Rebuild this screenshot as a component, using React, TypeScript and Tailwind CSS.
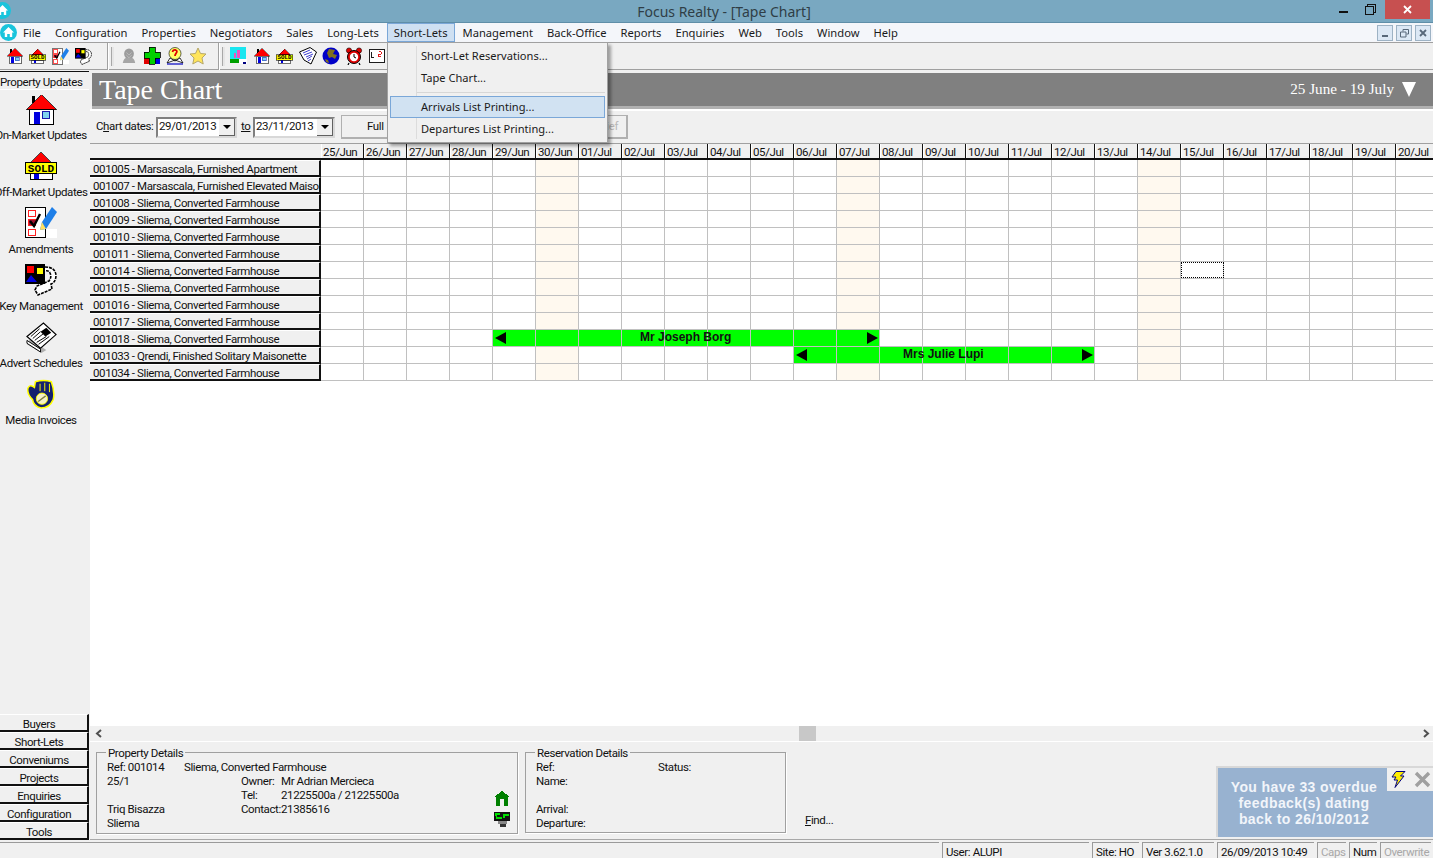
import React from 'react';

const menus = ['File', 'Configuration', 'Properties', 'Negotiators', 'Sales', 'Long-Lets', 'Short-Lets', 'Management', 'Back-Office', 'Reports', 'Enquiries', 'Web', 'Tools', 'Window', 'Help'];

const days = ['25/Jun', '26/Jun', '27/Jun', '28/Jun', '29/Jun', '30/Jun', '01/Jul', '02/Jul', '03/Jul', '04/Jul', '05/Jul', '06/Jul', '07/Jul', '08/Jul', '09/Jul', '10/Jul', '11/Jul', '12/Jul', '13/Jul', '14/Jul', '15/Jul', '16/Jul', '17/Jul', '18/Jul', '19/Jul', '20/Jul'];

const farmhouse = 'Sliema, Converted Farmhouse';
const properties = [
  '001005 - Marsascala, Furnished Apartment',
  '001007 - Marsascala, Furnished Elevated Maisonette',
  `001008 - ${farmhouse}`,
  `001009 - ${farmhouse}`,
  `001010 - ${farmhouse}`,
  `001011 - ${farmhouse}`,
  `001014 - ${farmhouse}`,
  `001015 - ${farmhouse}`,
  `001016 - ${farmhouse}`,
  `001017 - ${farmhouse}`,
  `001018 - ${farmhouse}`,
  '001033 - Qrendi, Finished Solitary Maisonette',
  `001034 - ${farmhouse}`,
];

const weekends = [5, 12, 19];
const bookings: Record<number, { from: number; to: number }> = {
  10: { from: 4, to: 12 },
  11: { from: 11, to: 17 },
};

const AppIcon = ({ size = 17 }: { size?: number }) => (
  <svg width={size} height={size} viewBox="0 0 17 17" className="shrink-0">
    <circle cx="8.5" cy="8.5" r="8.5" fill="#19c4dc" />
    <path d="M8.5 3 L14 8.5 H12.2 V13 H9.8 V10 H7.2 V13 H4.8 V8.5 H3 Z" fill="#fff" />
  </svg>
);

const House = ({ size = 32 }: { size?: number }) => (
  <svg width={size} height={size} viewBox="0 0 28 28" shapeRendering="crispEdges" className="shrink-0">
    <rect x="5" y="2" width="3" height="6" fill="#000" />
    <polygon points="14,0.5 27.5,14 0.5,14" fill="#ff0000" stroke="#000" strokeWidth="0.7" />
    <rect x="3.5" y="14" width="21" height="13.5" fill="#fff" stroke="#000" />
    <rect x="7" y="16" width="5.5" height="11" fill="#0000e0" />
    <rect x="14.5" y="16" width="7" height="6" fill="#7fd4ee" stroke="#0000a0" strokeWidth="0.8" />
  </svg>
);

const SoldHouse = ({ size = 32, wide = 32 }: { size?: number; wide?: number }) => (
  <svg width={wide} height={size} viewBox="0 0 32 28" shapeRendering="crispEdges" className="shrink-0">
    <polygon points="16,0.5 27,11 5,11" fill="#ff0000" stroke="#000" strokeWidth="0.7" />
    <rect x="5" y="21" width="22" height="6" fill="#fff" stroke="#000" />
    <rect x="9" y="21" width="5" height="6" fill="#0000e0" />
    <rect x="0.5" y="10.5" width="31" height="10.5" fill="#ffff00" stroke="#000" />
    <text x="16" y="19.5" textAnchor="middle" letterSpacing="0" fontFamily="'Liberation Mono', monospace" fontWeight="700" fontSize="11" fill="#000">SOLD</text>
  </svg>
);

const Checklist = ({ size = 32 }: { size?: number }) => (
  <svg width={size} height={size} viewBox="0 0 32 32" shapeRendering="crispEdges" className="shrink-0">
    <rect x="0.5" y="0.5" width="20" height="30" fill="#fff" stroke="#000" />
    <rect x="3.5" y="3.5" width="7" height="6" fill="#fff" stroke="#ff2020" strokeWidth="1.5" />
    <rect x="3.5" y="12.5" width="7" height="6" fill="#a01030" stroke="#ff2020" strokeWidth="1.5" />
    <rect x="3.5" y="22.5" width="7" height="6" fill="#fff" stroke="#ff2020" strokeWidth="1.5" />
    <path d="M5 14 L9 19 L15 7" fill="none" stroke="#000" strokeWidth="2.4" shapeRendering="auto" />
    <polygon points="27,0 32,5 21,22 15,23 17,15" fill="#1e7fe8" shapeRendering="auto" />
    <polygon points="21,22 15,23 17,15" fill="#ffe060" shapeRendering="auto" />
    <rect x="21" y="22" width="11" height="9" fill="#fff" />
  </svg>
);

const KeyMgmt = ({ size = 32 }: { size?: number }) => (
  <svg width={size} height={size} viewBox="0 0 32 32" className="shrink-0">
    <path d="M20 3 Q30 3 31 11 Q31 18 26 20 L27 25 L13 31 L10 26 L12 22 L24 17 Q27 13 25 9 Q24 6 20 7" fill="#fff" stroke="#000" strokeWidth="1.6" strokeDasharray="3 1" />
    <rect x="0" y="0" width="20" height="20" fill="#000" />
    <rect x="2" y="2" width="7" height="7" fill="#ff0000" />
    <rect x="12" y="4" width="6" height="6" fill="#ffff00" />
    <polygon points="6,11 12,18 1,18" fill="#0000e0" />
  </svg>
);

const Newspaper = ({ size = 32 }: { size?: number }) => (
  <svg width={size} height={size} viewBox="0 0 32 32" className="shrink-0">
    <polygon points="1,23 16,32 21,29 4,18" fill="#b0b0b0" />
    <polygon points="1,19 15,28 15,31 1,22" fill="#fff" stroke="#000" strokeWidth="1" />
    <polygon points="1,15 18,1 31,13 15,27" fill="#fff" stroke="#000" strokeWidth="1.2" />
    <polygon points="15,10 21,6 26,11 20,15" fill="#000" />
    <path d="M5 15 L14 7 M7 17 L15 10 M9 19 L18 12 M11 21 L21 15 M13 23 L24 15" stroke="#000" strokeWidth="1" />
  </svg>
);

const Glove = ({ size = 32 }: { size?: number }) => (
  <svg width={size} height={size} viewBox="0 0 32 32" className="shrink-0">
    <path d="M2 10 Q4 5 9 9 L10 3 Q19 0 27 3 Q31 14 29 22 Q25 31 16 31 Q8 29 7 22 Q1 16 2 10 Z" fill="#14206e" stroke="#ffff00" strokeWidth="1.6" />
    <path d="M15 5 V13 M20 4 V13 M25 5 V14" stroke="#ffff00" strokeWidth="1" />
    <circle cx="17" cy="21" r="6" fill="#f5f0c8" stroke="#ffff00" strokeWidth="1" />
    <path d="M13 24 L21 18" stroke="#808040" strokeWidth="1.4" />
  </svg>
);

const Person = () => (
  <svg width={16} height={18} viewBox="0 0 18 18" className="shrink-0">
    <ellipse cx="9" cy="6.5" rx="5.5" ry="6" fill="#9c9c9c" />
    <path d="M2 17 Q3 11 7 11 H11 Q15 11 16 17 Z" fill="#a6a6a6" />
    <path d="M6 5 L9 8 L12 5 M6 8 L9 11 L12 8" stroke="#bdbdbd" strokeWidth="1" fill="none" />
  </svg>
);

const GreenCross = () => (
  <svg width={18} height={18} viewBox="0 0 18 18" shapeRendering="crispEdges" className="shrink-0">
    <rect x="1" y="11" width="6" height="6" fill="#e00000" />
    <rect x="11" y="11" width="6" height="6" fill="#0000e0" />
    <path d="M6 0 H12 V5 H17 V11 H12 V17 H6 V11 H1 V5 H6 Z" fill="#00d000" stroke="#000" strokeWidth="0.8" />
  </svg>
);

const Question = () => (
  <svg width={18} height={18} viewBox="0 0 18 18" className="shrink-0">
    <circle cx="9" cy="6.5" r="6" fill="#ffff66" stroke="#000" strokeWidth="0.6" />
    <path d="M6.5 5 Q7 2.5 9.5 3 Q12 4 10 6.5 Q9 7.5 9 9" fill="none" stroke="#e00000" strokeWidth="1.8" />
    <path d="M1 16 L9 13 L17 16 L14 11 L9 14 L4 11 Z" fill="#fff" stroke="#000" strokeWidth="0.8" />
    <path d="M1 17 H17" stroke="#0000c0" strokeWidth="1.2" />
  </svg>
);

const Star = () => (
  <svg width={18} height={18} viewBox="0 0 18 18" className="shrink-0">
    <polygon points="9,1 11.5,6.5 17,7 13,11 14.2,17 9,14 3.8,17 5,11 1,7 6.5,6.5" fill="#ffe55c" stroke="#b5a76a" strokeWidth="1" />
  </svg>
);

const Picture = () => (
  <svg width={18} height={18} viewBox="0 0 18 18" shapeRendering="crispEdges" className="shrink-0">
    <rect x="0" y="0" width="16" height="15" fill="#19e6f0" />
    <rect x="0" y="12" width="10" height="4" fill="#00a000" />
    <rect x="7" y="3" width="3" height="8" fill="#f050c0" />
    <rect x="4" y="6" width="2" height="5" fill="#f050c0" />
    <rect x="9" y="12" width="8" height="5" fill="#fff" />
    <rect x="13" y="15" width="3" height="2" fill="#000080" />
  </svg>
);

const Survey = () => (
  <svg width={18} height={18} viewBox="0 0 18 18" className="shrink-0">
    <polygon points="0.5,5 11,0.5 17.5,5 12,17 5,13" fill="#fff" stroke="#000" strokeWidth="1" />
    <path d="M4 6 L11 3 M5 8 L13 5 M7 10 L14 7 M8 12 L13 9 M9 14 L12 12" stroke="#4040d0" strokeWidth="1" />
  </svg>
);

const Globe = () => (
  <svg width={18} height={18} viewBox="0 0 18 18" className="shrink-0">
    <circle cx="9" cy="9" r="8.5" fill="#0000c8" />
    <path d="M7 2 L13 3 L11 7 L15 8 L13 12 L10 10 L7 11 L5 6 Z" fill="#807020" />
    <path d="M3 12 L6 13 L7 16 L4 15 Z" fill="#807020" />
  </svg>
);

const AlarmClock = () => (
  <svg width={18} height={18} viewBox="0 0 18 18" className="shrink-0">
    <circle cx="4" cy="3.5" r="2.6" fill="#e00000" stroke="#000" strokeWidth="0.6" />
    <circle cx="14" cy="3.5" r="2.6" fill="#e00000" stroke="#000" strokeWidth="0.6" />
    <circle cx="9" cy="10" r="6.5" fill="#e00000" stroke="#000" strokeWidth="1" />
    <circle cx="9" cy="10" r="4.2" fill="#fff" />
    <path d="M9 7 V10 L11 11" stroke="#000" strokeWidth="1" fill="none" />
    <path d="M4 16 L3 18 M14 16 L15 18" stroke="#000" strokeWidth="1.2" />
  </svg>
);

const BookIcon = () => (
  <svg width={16} height={16} viewBox="0 0 18 18" shapeRendering="crispEdges" className="shrink-0">
    <rect x="0.5" y="1.5" width="17" height="15" fill="#fff" stroke="#000" />
    <rect x="8.5" y="1" width="1" height="15" fill="#000" />
    <path d="M3 4 V11 H6" stroke="#000" strokeWidth="1" fill="none" />
    <path d="M11 4 H14 V7 H11 V10 H14" stroke="#e00000" strokeWidth="1" fill="none" />
  </svg>
);

const Bolt = () => (
  <svg width={15} height={17} viewBox="0 0 15 17" className="shrink-0">
    <path d="M5 0.5 H14 L9.5 5 H13 L4 16.5 L6.5 9 H3 L5 6 H1 Z" fill="#ffee00" stroke="#000080" strokeWidth="1" />
  </svg>
);

const GripSep = ({ className }: { className: string }) => (
  <div className={`flex h-full items-center ${className}`}>
    <div className="h-[27px] w-[2px] border-r border-r-white bg-[#a0a0a0]" />
    <div className="ml-[2px] h-[19px] w-[3px] border-l border-[#a8a8a8] bg-[#e6e6e6]" />
  </div>
);

const ToolSlot = ({ children }: { children: React.ReactNode }) => (
  <div className="flex h-full w-[23px] items-center justify-center">{children}</div>
);

const TitleBar = () => (
  <div className="relative flex h-[23px] shrink-0 items-center justify-center border-b border-[#5f8ea8] bg-[#79a8c1] pt-[2px] text-[14px] tracking-normal text-[#2f3e46] [font-family:'Noto_Sans',sans-serif]">
    <div className="absolute -left-[6px] top-[2px]">
      <AppIcon />
    </div>
    <span className="ml-[15px]">Focus Realty - [Tape Chart]</span>
    <div className="absolute right-[3px] top-0 flex items-start">
      <div className="mr-[17px] mt-[11px] h-[2px] w-[9px] bg-[#111]" />
      <div className="relative mr-[9px] mt-[4px] h-[11px] w-[11px]">
        <div className="absolute right-0 top-0 h-[9px] w-[9px] border border-[#111]" />
        <div className="absolute bottom-0 left-0 h-[9px] w-[9px] border border-[#111] bg-[#79a8c1]" />
      </div>
      <div className="flex h-[19px] w-[45px] items-center justify-center bg-[#c75050] text-white">
        <svg width="9" height="9" viewBox="0 0 9 9">
          <path d="M1 1 L8 8 M8 1 L1 8" stroke="#fff" strokeWidth="1.8" />
        </svg>
      </div>
    </div>
  </div>
);

const MenuBar = () => (
  <div className="relative flex h-[19px] shrink-0 items-center bg-[#f4f6fa] text-[11.2px] tracking-normal text-[#1a1a1a] [font-family:'Noto_Sans',sans-serif]">
    <div className="ml-0 mr-[-1px] w-[17px]">
      <AppIcon />
    </div>
    {menus.map((m) => (
      <div
        key={m}
        className={`mx-[1px] flex h-[19px] items-center px-[6px] ${m === 'Short-Lets' ? 'border border-[#7aa7d8] bg-[#cfe0f2] px-[5px]' : ''}`}
      >
        {m}
      </div>
    ))}
    <div className="absolute right-[2px] top-[2px] flex gap-[3px]">
      <div className="flex h-[16px] w-[16px] items-end justify-center border border-[#9db2c4] bg-[#dce8f5] pb-[3px]">
        <div className="h-[2px] w-[6px] bg-[#58687a]" />
      </div>
      <div className="flex h-[16px] w-[16px] items-center justify-center border border-[#9db2c4] bg-[#dce8f5]">
        <svg width="9" height="9" viewBox="0 0 9 9">
          <path d="M3 2.5 V0.5 H8.5 V5 H6.5 M0.5 3 H6 V8 H0.5 Z" stroke="#58687a" fill="none" />
        </svg>
      </div>
      <div className="flex h-[16px] w-[16px] items-center justify-center border border-[#9db2c4] bg-[#dce8f5]">
        <svg width="8" height="8" viewBox="0 0 8 8">
          <path d="M1 1 L7 7 M7 1 L1 7" stroke="#58687a" strokeWidth="1.8" />
        </svg>
      </div>
    </div>
  </div>
);

const ToolBar = () => (
  <div className="flex h-[28px] shrink-0 items-center border-y border-[#a0a0a0] bg-[#f0f0f0] pl-[3px]">
    <ToolSlot><House size={16} /></ToolSlot>
    <ToolSlot><SoldHouse size={15} wide={17} /></ToolSlot>
    <ToolSlot><Checklist size={17} /></ToolSlot>
    <ToolSlot><KeyMgmt size={17} /></ToolSlot>
    <GripSep className="ml-[12px] mr-[3px]" />
    <ToolSlot><Person /></ToolSlot>
    <ToolSlot><GreenCross /></ToolSlot>
    <ToolSlot><Question /></ToolSlot>
    <ToolSlot><Star /></ToolSlot>
    <GripSep className="ml-[9px] mr-[2px]" />
    <ToolSlot><Picture /></ToolSlot>
    <ToolSlot><House size={16} /></ToolSlot>
    <ToolSlot><SoldHouse size={15} wide={17} /></ToolSlot>
    <ToolSlot><Survey /></ToolSlot>
    <ToolSlot><Globe /></ToolSlot>
    <ToolSlot><AlarmClock /></ToolSlot>
    <ToolSlot><BookIcon /></ToolSlot>
  </div>
);

const ShortLetsMenu = () => (
  <div className="absolute left-[387px] top-[42px] z-20 w-[221px] border border-[#a0a0a0] bg-[#f0f0f0] py-[2px] text-[11.1px] tracking-normal text-[#1a1a1a] shadow-[3px_3px_3px_rgba(0,0,0,0.35)] [font-family:'Noto_Sans',sans-serif]">
    <div className="absolute bottom-[3px] left-[28px] top-[3px] w-px bg-[#dcdcdc]" />
    <div className="flex h-[22px] items-center pl-[33px]">Short-Let Reservations...</div>
    <div className="flex h-[22px] items-center pl-[33px]">Tape Chart...</div>
    <div className="ml-[29px] mr-[2px] mt-[3px] h-px bg-[#d7d7d7]" />
    <div className="relative mx-[2px] mt-[3px] flex h-[22px] items-center border border-[#7aa7d8] bg-[#d1e2f2] pl-[30px]">Arrivals List Printing...</div>
    <div className="flex h-[22px] items-center pl-[33px]">Departures List Printing...</div>
  </div>
);

const SideItem = ({ icon, label }: { icon: React.ReactNode; label: string }) => (
  <div className="flex h-[57px] w-[82px] flex-col items-center">
    <div className="flex h-[34px] items-center justify-center">{icon}</div>
    <div className="mt-[4px] whitespace-nowrap text-center">{label}</div>
  </div>
);

const SideTab = ({ label }: { label: string }) => (
  <div className="flex h-[18px] w-[89px] items-center justify-center border-b-2 border-r-2 border-t border-b-[#111] border-r-[#111] border-t-white bg-[#f0f0f0] pr-[9px] pt-[4px]">
    {label}
  </div>
);

const Sidebar = () => (
  <div className="flex w-[90px] shrink-0 flex-col overflow-hidden bg-[#f0f0f0] pt-[1px]">
    <div className="flex h-[19px] w-[89px] items-center whitespace-nowrap border-b border-t border-b-white border-t-[#111] pt-[4px]">Property Updates</div>
    <div className="pt-[2px]">
      <SideItem icon={<House size={31} />} label="On-Market Updates" />
      <SideItem icon={<SoldHouse size={30} />} label="Off-Market Updates" />
      <SideItem icon={<Checklist size={32} />} label="Amendments" />
      <SideItem icon={<KeyMgmt size={32} />} label="Key Management" />
      <SideItem icon={<Newspaper size={31} />} label="Advert Schedules" />
      <SideItem icon={<Glove size={30} />} label="Media Invoices" />
    </div>
    <div className="mt-auto">
      {['Buyers', 'Short-Lets', 'Conveniums', 'Projects', 'Enquiries', 'Configuration', 'Tools'].map((t) => (
        <SideTab key={t} label={t} />
      ))}
    </div>
  </div>
);

const DateBox = ({ value, width }: { value: string; width: string }) => (
  <div className={`flex h-[21px] items-center border-2 border-[#808080] border-b-[#d8d8d8] border-r-[#d8d8d8] bg-white pl-[1px] ${width}`}>
    <span className="flex-1">{value}</span>
    <div className="flex h-[17px] w-[16px] items-center justify-center border-b border-r border-[#606060] bg-[#f0f0f0]">
      <div className="h-0 w-0 border-x-[4px] border-t-[4px] border-x-transparent border-t-black" />
    </div>
  </div>
);

const Banner = () => (
  <div className="ml-[2px] mt-[3px] flex h-[36px] items-center border-b-[3px] border-b-[#b0b0b0] bg-[#808080] pl-[7px] pr-[17px] tracking-normal text-white [font-family:'Liberation_Serif',serif]">
    <span className="text-[28px] leading-none">Tape Chart</span>
    <span className="-mt-[2px] ml-auto text-[15.2px]">25 June - 19 July</span>
    <svg width="14" height="15" viewBox="0 0 14 15" className="ml-[8px]">
      <polygon points="0,0 14,0 7,15" fill="#fff" />
    </svg>
  </div>
);

const Controls = () => (
  <div className="flex h-[34px] items-center border-t-2 border-t-white bg-[#f0f0f0] pl-[6px]">
    <span className="w-[60px] whitespace-nowrap"><span>C</span><span className="underline">h</span>art dates:</span>
    <DateBox value="29/01/2013" width="w-[81px]" />
    <span className="ml-[4px] mr-[2px] w-[10px] underline">to</span>
    <DateBox value="23/11/2013" width="w-[82px]" />
    <div className="ml-[6px] flex h-[24px] w-[68px] items-center border border-b-2 border-r-2 border-[#b0b0b0] bg-[#f0f0f0] pl-[25px]">Full</div>
    <div className="ml-[151px] flex h-[24px] w-[68px] items-center justify-end border border-b-2 border-r-2 border-[#b0b0b0] bg-[#f0f0f0] pr-[8px] text-[#b8b8b8]">Brief</div>
  </div>
);

const Arrow = ({ dir, x }: { dir: 'left' | 'right'; x: number }) => (
  <svg width="12" height="12" viewBox="0 0 12 12" className="absolute top-[2px]" style={{ left: x - 90 }}>
    <polygon points={dir === 'left' ? '11,0 11,12 0,6' : '1,0 1,12 12,6'} fill="#000" />
  </svg>
);

const BarLabel = ({ left, children }: { left: string; children: string }) => (
  <span className={`absolute top-[1px] text-[12px] font-bold tracking-normal [font-family:'Liberation_Sans',sans-serif] ${left}`}>{children}</span>
);

const Chart = () => (
  <div className="min-h-0 flex-1 overflow-hidden bg-white">
    <div className="flex h-[17px] border-b-2 border-t border-b-[#111] border-t-[#a0a0a0]">
      <div className="w-[231px] shrink-0 bg-[#f0f0f0]" />
      {days.map((d) => (
        <div key={d} className="flex w-[43px] shrink-0 items-center border-l border-r border-l-white border-r-[#111] bg-[#f0f0f0] pl-[1px] pt-[3px]">
          {d}
        </div>
      ))}
    </div>
    {properties.map((p, row) => {
      const booking = bookings[row];
      return (
        <div key={p} className="relative flex h-[17px]">
          <div className="flex w-[231px] shrink-0 items-center overflow-hidden whitespace-nowrap border-b-2 border-r-2 border-t border-b-[#111] border-r-[#111] border-t-white bg-[#f0f0f0] pl-[3px] pt-[4px]">
            {p}
          </div>
          {days.map((d, col) => {
            const booked = booking && col >= booking.from && col <= booking.to;
            const bg = booked ? 'bg-[#00ff00]' : weekends.includes(col) ? 'bg-[#fff9ef]' : 'bg-white';
            return (
              <div key={d} className={`w-[43px] shrink-0 border-b border-r border-[#c0c0c0] ${bg}`}>
                {row === 6 && col === 20 && <div className="h-[16px] w-[43px] border border-dotted border-black" />}
              </div>
            );
          })}
          {row === 10 && (
            <>
              <Arrow dir="left" x={495} />
              <Arrow dir="right" x={866} />
              <BarLabel left="left-[550px]">Mr Joseph Borg</BarLabel>
            </>
          )}
          {row === 11 && (
            <>
              <Arrow dir="left" x={796} />
              <Arrow dir="right" x={1081} />
              <BarLabel left="left-[813px]">Mrs Julie Lupi</BarLabel>
            </>
          )}
        </div>
      );
    })}
  </div>
);

const ScrollBar = () => (
  <div className="flex h-[16px] shrink-0 items-center border-b border-b-white bg-[#f0f0f0]">
    <svg width="8" height="9" viewBox="0 0 8 9" className="ml-[5px]">
      <path d="M6 1 L2 4.5 L6 8" stroke="#505050" strokeWidth="2" fill="none" />
    </svg>
    <div className="ml-[696px] h-[15px] w-[17px] bg-[#c8c8c8]" />
    <svg width="8" height="9" viewBox="0 0 8 9" className="ml-auto mr-[3px]">
      <path d="M2 1 L6 4.5 L2 8" stroke="#505050" strokeWidth="2" fill="none" />
    </svg>
  </div>
);

const GroupBox = ({ title, className, children }: { title: string; className: string; children: React.ReactNode }) => (
  <div className={`relative border border-[#a0a0a0] shadow-[1px_1px_0_#fff] ${className}`}>
    <span className="absolute -top-[7px] left-[9px] bg-[#f0f0f0] px-[2px] leading-[14px]">{title}</span>
    {children}
  </div>
);

const DetailRow = ({ children }: { children: React.ReactNode }) => <div className="flex h-[14px] items-center whitespace-nowrap">{children}</div>;

const PropertyDetails = () => (
  <GroupBox title="Property Details" className="h-[82px] w-[422px] pl-[10px] pt-[8px]">
    <DetailRow>
      <span className="w-[77px]">Ref: 001014</span>
      <span>Sliema, Converted Farmhouse</span>
    </DetailRow>
    <DetailRow>
      <span className="w-[134px]">25/1</span>
      <span className="w-[40px]">Owner:</span>
      <span>Mr Adrian Mercieca</span>
    </DetailRow>
    <DetailRow>
      <span className="w-[134px]" />
      <span className="w-[40px]">Tel:</span>
      <span>21225500a / 21225500a</span>
    </DetailRow>
    <DetailRow>
      <span className="w-[134px]">Triq Bisazza</span>
      <span className="w-[40px]">Contact:</span>
      <span>21385616</span>
    </DetailRow>
    <DetailRow>Sliema</DetailRow>
    <div className="absolute right-[7px] top-[38px] flex flex-col items-center gap-[6px]">
      <svg width="16" height="15" viewBox="0 0 16 15" shapeRendering="crispEdges">
        <path d="M8 0 L16 6 H14 V15 H10 V8 H6 V15 H2 V6 H0 Z" fill="#008000" />
      </svg>
      <svg width="16" height="15" viewBox="0 0 16 15" shapeRendering="crispEdges">
        <rect x="0" y="0" width="16" height="9" fill="#111" />
        <path d="M1 1 H6 V3 H3 V5 H8 V7 H2 Z M9 2 H15 V4 H11 V6 H9 Z" fill="#00e000" />
        <rect x="4" y="9" width="9" height="3" fill="#888" />
        <rect x="6" y="12" width="6" height="3" fill="#333" />
      </svg>
    </div>
  </GroupBox>
);

const ReservationDetails = () => (
  <GroupBox title="Reservation Details" className="h-[81px] w-[261px] pl-[10px] pt-[8px]">
    <DetailRow>
      <span className="w-[122px]">Ref:</span>
      <span>Status:</span>
    </DetailRow>
    <DetailRow>Name:</DetailRow>
    <DetailRow>&nbsp;</DetailRow>
    <DetailRow>Arrival:</DetailRow>
    <DetailRow>Departure:</DetailRow>
  </GroupBox>
);

const BottomPanel = () => (
  <div className="relative flex h-[98px] shrink-0 items-start border-b border-b-[#a8a8a8] bg-[#f0f0f0] pl-[6px] pt-[10px]">
    <PropertyDetails />
    <div className="ml-[7px]">
      <ReservationDetails />
    </div>
    <span className="ml-[19px] mt-[63px]"><span className="underline">F</span>ind...</span>
    <div className="absolute bottom-[2px] right-0 flex h-[71px] w-[217px] flex-col items-center justify-center border-l-2 border-t-2 border-[#d8d8d8] bg-[#98b2d0] pr-[43px] text-[14px] font-bold leading-[16px] tracking-[0.4px] text-[#f2f5fa] [font-family:'Liberation_Sans',sans-serif]">
      <div className="absolute right-0 top-0 flex h-[23px] w-[46px] items-center justify-between bg-[#f0f0f0] pl-[4px] pr-[2px]">
        <Bolt />
        <svg width="17" height="17" viewBox="0 0 17 17">
          <path d="M2 2 L15 15 M15 2 L2 15" stroke="#a0a0a0" strokeWidth="3.4" />
        </svg>
      </div>
      <span className="whitespace-nowrap">You have 33 overdue</span>
      <span className="whitespace-nowrap">feedback(s) dating</span>
      <span className="whitespace-nowrap">back to 26/10/2012</span>
    </div>
  </div>
);

const StatusCell = ({ width, muted, children }: { width: string; muted?: boolean; children: React.ReactNode }) => (
  <div className={`flex h-[16px] items-center whitespace-nowrap border-l border-t border-[#9a9a9a] pl-[3px] pt-[4px] ${width} ${muted ? 'text-[#a8a8a8]' : ''}`}>{children}</div>
);

const StatusBar = () => (
  <div className="flex h-[18px] shrink-0 items-end gap-[3px] bg-[#f0f0f0] pr-[2px]">
    <div className="h-[16px] flex-1 border-t border-t-[#9a9a9a]" />
    <StatusCell width="w-[147px]">User: ALUPI</StatusCell>
    <StatusCell width="w-[47px]">Site: HO</StatusCell>
    <StatusCell width="w-[72px]">Ver 3.62.1.0</StatusCell>
    <StatusCell width="w-[97px]">26/09/2013 10:49</StatusCell>
    <StatusCell width="w-[29px]" muted>Caps</StatusCell>
    <StatusCell width="w-[28px]">Num</StatusCell>
    <StatusCell width="w-[51px]" muted>Overwrite</StatusCell>
  </div>
);

const App = () => {
  return (
    <div className="relative flex h-[858px] w-[1433px] flex-col overflow-hidden bg-[#f0f0f0] text-[11.5px] leading-none tracking-[-0.4px] text-[#111] [font-family:'Roboto',sans-serif]">
      <TitleBar />
      <MenuBar />
      <ToolBar />
      <ShortLetsMenu />
      <div className="flex min-h-0 flex-1">
        <Sidebar />
        <div className="flex min-w-0 flex-1 flex-col">
          <Banner />
          <Controls />
          <Chart />
          <ScrollBar />
          <BottomPanel />
        </div>
      </div>
      <StatusBar />
    </div>
  );
};

export default App;
